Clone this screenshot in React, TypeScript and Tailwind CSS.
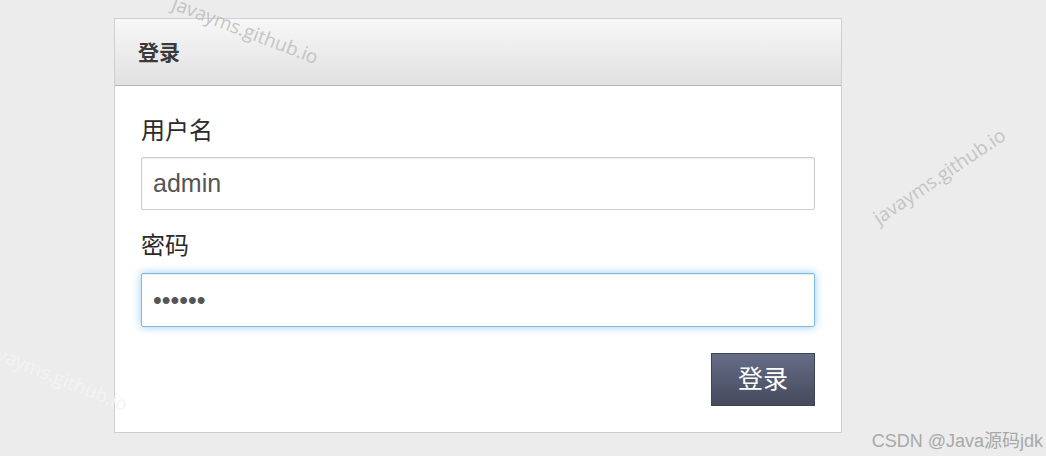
import React from "react";

const cjk = "font-['Liberation_Sans','Noto_Sans_CJK_SC',sans-serif]";

function Watermark({ className }: { className: string }) {
  return (
    <span
      className={`pointer-events-none absolute whitespace-nowrap font-['Open_Sans',sans-serif] text-[19px] ${className}`}
    >
      javayms.github.io
    </span>
  );
}

export default function App() {
  return (
    <div className={`relative h-[456px] w-full overflow-hidden bg-[#ececec] pt-[18px] ${cjk}`}>
      <div className="ml-[114px] w-[728px] border border-[#cfcfcf] bg-white">
        <div className="flex h-[67px] items-center border-b border-[#b4b4b4] bg-gradient-to-b from-[#f7f7f7] to-[#e1e1e1] pl-[23px]">
          <span className="mt-[2px] text-[21px] font-bold text-[#3a3a3a]">登录</span>
        </div>

        <div className="px-[26px] pt-[27px] pb-[26px]">
          <div className="flex h-[36px] items-center text-[24px] text-[#2a2a2a]">用户名</div>
          <input
            readOnly
            value="admin"
            className={`mt-[8px] block h-[53px] w-full rounded-[2px] border border-[#cccccc] px-[11px] text-[25px] text-[#555] shadow-[inset_0_1px_2px_rgba(0,0,0,0.08)] outline-none ${cjk}`}
          />

          <div className="mt-[18px] flex h-[36px] items-center text-[24px] text-[#2a2a2a]">密码</div>
          <input
            readOnly
            type="password"
            value="123456"
            className={`mt-[9px] block h-[54px] w-full rounded-[2px] border border-[#7fbadf] px-[11px] text-[25px] text-[#555] shadow-[inset_0_1px_1px_rgba(0,0,0,0.075),0_0_8px_rgba(82,168,236,0.6)] outline-none ${cjk}`}
          />

          <div className="mt-[26px] flex justify-end">
            <button
              className={`flex h-[53px] w-[104px] items-center justify-center border border-[#3e4252] bg-gradient-to-b from-[#666d87] to-[#454a5c] text-[25px] text-white ${cjk}`}
            >
              登录
            </button>
          </div>
        </div>
      </div>

      <Watermark className="left-[168px] top-[16px] rotate-[21deg] text-[#b8b8b8]/80" />
      <Watermark className="left-[862px] top-[162px] -rotate-[34deg] text-[#c4c4c4]" />
      <Watermark className="-left-[22px] top-[362px] rotate-[22deg] text-[#f3f3f3]" />

      <span className="absolute right-[3px] bottom-[6px] whitespace-nowrap text-[18px] leading-none text-[#a9a9a9]">
        CSDN @Java源码jdk
      </span>
    </div>
  );
}
